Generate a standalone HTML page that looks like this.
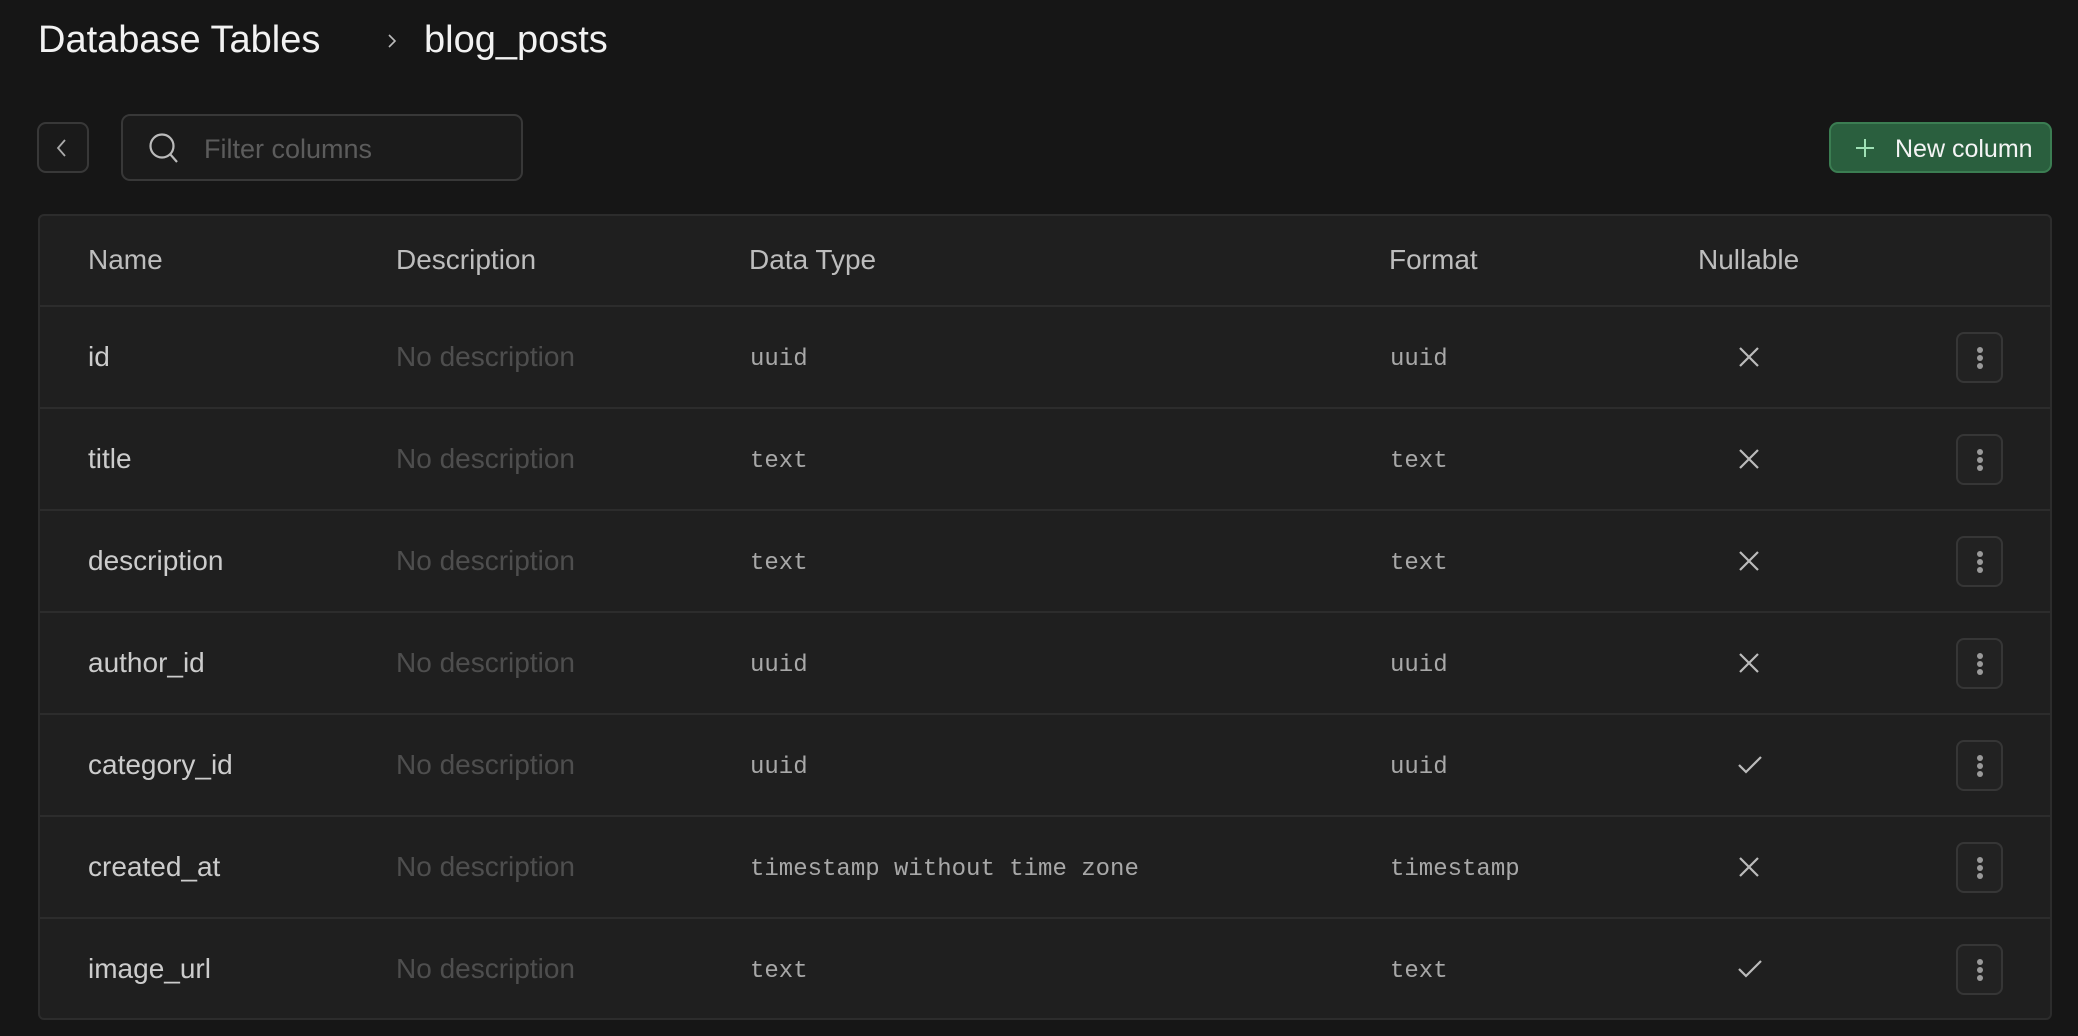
<!DOCTYPE html>
<html><head><meta charset="utf-8"><style>
*{box-sizing:border-box;margin:0;padding:0}
body{width:2078px;height:1036px;background:#161616;font-family:"Liberation Sans",sans-serif;position:relative;overflow:hidden}
.a{position:absolute;white-space:nowrap}
.t{font-size:38px;color:#f2f2f2;top:19px}
.tbl{position:absolute;left:38px;top:214px;width:2014px;height:806px;background:#1f1f1f;border:2px solid #2c2c2c;border-radius:6px}
.row{position:absolute;left:0;width:2010px;height:102px;border-top:2px solid #2c2c2c}
.c{position:absolute;top:0;height:100px;line-height:100px;white-space:nowrap}
.h{font-size:28px;color:#bdbdbd}
.n{font-size:28px;color:#cccccc;left:48px}
.d{font-size:28px;color:#4e4e4e;left:356px}
.m{font-family:"Liberation Mono",monospace;font-size:24px;color:#a8a8a8;top:3px}
.k{position:absolute;left:1916px;top:25px;width:47px;height:51px;border:2px solid #363636;border-radius:8px;background:#222}
.k i{position:absolute;left:19px;width:6px;height:6px;border-radius:3px;background:#9a9a9a}
.ic{position:absolute;left:1697px;top:38px}
</style></head><body>
<div class="a t" style="left:38px">Database Tables</div>
<svg class="a" style="left:386px;top:32px" width="12" height="18" viewBox="0 0 12 18"><path d="M3 3l6 6-6 6" fill="none" stroke="#bbb" stroke-width="1.6"/></svg>
<div class="a t" style="left:424px">blog_posts</div>

<div class="a" style="left:37px;top:122px;width:52px;height:51px;border:2px solid #383838;border-radius:9px;background:#1a1a1a"></div>
<svg class="a" style="left:54px;top:137px" width="16" height="22" viewBox="0 0 16 22"><path d="M11 3L4 11l7 8" fill="none" stroke="#aaa" stroke-width="1.8"/></svg>

<div class="a" style="left:121px;top:114px;width:402px;height:67px;border:2px solid #383838;border-radius:9px;background:#1b1b1b"></div>
<svg class="a" style="left:145px;top:130px" width="40" height="40" viewBox="0 0 40 40"><circle cx="17" cy="16" r="11.5" fill="none" stroke="#bbb" stroke-width="2.2"/><path d="M25 24l7 8" stroke="#bbb" stroke-width="2.2"/></svg>
<div class="a" style="left:204px;top:134px;font-size:27px;color:#5c5c5c">Filter columns</div>

<div class="a" style="left:1829px;top:122px;width:223px;height:51px;border:2px solid #3b7d52;border-radius:9px;background:#2a5f3e"></div>
<svg class="a" style="left:1853px;top:136px" width="24" height="24" viewBox="0 0 24 24"><path d="M12 3v18M3 12h18" stroke="#9fe0b5" stroke-width="2"/></svg>
<div class="a" style="left:1895px;top:135px;font-size:25px;color:#f4f4f4">New column</div>

<div class="tbl">
 <div class="row" style="top:0;border-top:none;height:90px">
  <div class="c h" style="left:48px;line-height:88px">Name</div>
  <div class="c h" style="left:356px;line-height:88px">Description</div>
  <div class="c h" style="left:709px;line-height:88px">Data Type</div>
  <div class="c h" style="left:1349px;line-height:88px">Format</div>
  <div class="c h" style="left:1658px;line-height:88px">Nullable</div>
 </div>
 <div class="row" style="top:89px"><div class="c n">id</div><div class="c d">No description</div><div class="c m" style="left:710px">uuid</div><div class="c m" style="left:1350px">uuid</div><svg class="ic" width="24" height="24" viewBox="0 0 24 24"><path d="M3 3l18 18M21 3L3 21" stroke="#bbb" stroke-width="2.2"/></svg><div class="k"><i style="top:13px"></i><i style="top:21px"></i><i style="top:29px"></i></div></div>
 <div class="row" style="top:191px"><div class="c n">title</div><div class="c d">No description</div><div class="c m" style="left:710px">text</div><div class="c m" style="left:1350px">text</div><svg class="ic" width="24" height="24" viewBox="0 0 24 24"><path d="M3 3l18 18M21 3L3 21" stroke="#bbb" stroke-width="2.2"/></svg><div class="k"><i style="top:13px"></i><i style="top:21px"></i><i style="top:29px"></i></div></div>
 <div class="row" style="top:293px"><div class="c n">description</div><div class="c d">No description</div><div class="c m" style="left:710px">text</div><div class="c m" style="left:1350px">text</div><svg class="ic" width="24" height="24" viewBox="0 0 24 24"><path d="M3 3l18 18M21 3L3 21" stroke="#bbb" stroke-width="2.2"/></svg><div class="k"><i style="top:13px"></i><i style="top:21px"></i><i style="top:29px"></i></div></div>
 <div class="row" style="top:395px"><div class="c n">author_id</div><div class="c d">No description</div><div class="c m" style="left:710px">uuid</div><div class="c m" style="left:1350px">uuid</div><svg class="ic" width="24" height="24" viewBox="0 0 24 24"><path d="M3 3l18 18M21 3L3 21" stroke="#bbb" stroke-width="2.2"/></svg><div class="k"><i style="top:13px"></i><i style="top:21px"></i><i style="top:29px"></i></div></div>
 <div class="row" style="top:497px"><div class="c n">category_id</div><div class="c d">No description</div><div class="c m" style="left:710px">uuid</div><div class="c m" style="left:1350px">uuid</div><svg class="ic" width="26" height="24" viewBox="0 0 26 24"><path d="M2 12l7 7L24 4" fill="none" stroke="#bbb" stroke-width="2.2"/></svg><div class="k"><i style="top:13px"></i><i style="top:21px"></i><i style="top:29px"></i></div></div>
 <div class="row" style="top:599px"><div class="c n">created_at</div><div class="c d">No description</div><div class="c m" style="left:710px">timestamp without time zone</div><div class="c m" style="left:1350px">timestamp</div><svg class="ic" width="24" height="24" viewBox="0 0 24 24"><path d="M3 3l18 18M21 3L3 21" stroke="#bbb" stroke-width="2.2"/></svg><div class="k"><i style="top:13px"></i><i style="top:21px"></i><i style="top:29px"></i></div></div>
 <div class="row" style="top:701px"><div class="c n">image_url</div><div class="c d">No description</div><div class="c m" style="left:710px">text</div><div class="c m" style="left:1350px">text</div><svg class="ic" width="26" height="24" viewBox="0 0 26 24"><path d="M2 12l7 7L24 4" fill="none" stroke="#bbb" stroke-width="2.2"/></svg><div class="k"><i style="top:13px"></i><i style="top:21px"></i><i style="top:29px"></i></div></div>
</div>
</body></html>
